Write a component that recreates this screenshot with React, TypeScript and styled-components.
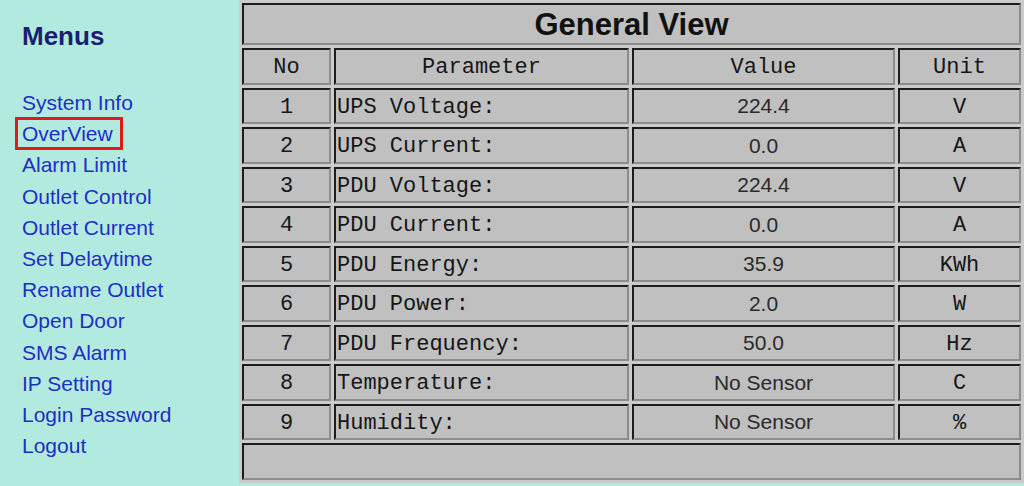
import React from "react";
import styled, { createGlobalStyle, css } from "styled-components";

const GlobalStyle = createGlobalStyle`
  html, body { margin: 0; padding: 0; background: #b2eadf; }
  body { width: 1024px; height: 486px; overflow: hidden; font-family: "Liberation Sans", Arial, sans-serif; }
`;

const Page = styled.div`
  display: flex;
  align-items: flex-start;
  width: 1024px;
  height: 486px;
  background: #b2eadf;
`;

const Sidebar = styled.nav`
  width: 239px;
  flex: none;
  box-sizing: border-box;
  padding: 21px 0 0 22px;
`;

const MenuTitle = styled.h1`
  margin: 0;
  font: bold 26px/30px "Liberation Sans", Arial, sans-serif;
  color: #1b1f70;
`;

const MenuList = styled.ul`
  list-style: none;
  margin: 36px 0 0;
  padding: 0;
`;

const MenuItem = styled.li`
  height: 31.2px;
  font: 21px/31.2px "Liberation Sans", Arial, sans-serif;
`;

const MenuLink = styled.a<{ $active?: boolean }>`
  display: inline-block;
  color: #1f2fc4;
  text-decoration: none;
  ${(p) =>
    p.$active &&
    css`
      outline: 3px solid #e01a1a;
      outline-offset: -2px;
      padding: 0 9px 0 6px;
      margin-left: -6px;
    `}
`;

const Table = styled.table`
  flex: none;
  width: 785px;
  table-layout: fixed;
  border-collapse: separate;
  border-spacing: 3px;
  background: #cbcbcb;
`;

const Row = styled.tr<{ $title?: boolean }>`
  height: ${(p) => (p.$title ? "42px" : "36.5px")};
`;

const Cell = styled.td<{ $kind?: "mono" | "sans" | "title"; $left?: boolean }>`
  background: #c0c0c0;
  border-style: solid;
  border-width: 2px;
  border-color: #1c1c1c #8c8c8c #8c8c8c #1c1c1c;
  padding: 0 1px;
  vertical-align: middle;
  text-align: ${(p) => (p.$left ? "left" : "center")};
  white-space: pre;
  overflow: hidden;
  color: #161616;
  ${(p) =>
    p.$kind === "title"
      ? css`
          font-family: "Liberation Sans", Arial, sans-serif;
          font-size: 31px;
          font-weight: bold;
          line-height: 1;
          color: #111;
        `
      : p.$kind === "sans"
      ? css`
          font-family: "Liberation Sans", Arial, sans-serif;
          font-size: 21px;
          font-weight: normal;
          line-height: 1;
          color: #2a2a2a;
          padding-top: 0;
        `
      : css`
          font-family: "Liberation Mono", "Courier New", monospace;
          font-size: 22px;
          font-weight: normal;
          line-height: 1;
          padding-top: 4px;
        `}
`;

const HeadCell = styled(Cell).attrs({ as: "th" })``;

const menus = [
  "System Info",
  "OverView",
  "Alarm Limit",
  "Outlet Control",
  "Outlet Current",
  "Set Delaytime",
  "Rename Outlet",
  "Open Door",
  "SMS Alarm",
  "IP Setting",
  "Login Password",
  "Logout",
];

const rows: [string, string, string, string][] = [
  ["1", "UPS Voltage:", "224.4", "V"],
  ["2", "UPS Current:", "0.0", "A"],
  ["3", "PDU Voltage:", "224.4", "V"],
  ["4", "PDU Current:", "0.0", "A"],
  ["5", "PDU Energy:", "35.9", "KWh"],
  ["6", "PDU Power:", "2.0", "W"],
  ["7", "PDU Frequency:", "50.0", "Hz"],
  ["8", "Temperature:", "No Sensor", "C"],
  ["9", "Humidity:", "No Sensor", "%"],
];

export default function App() {
  return (
    <>
      <GlobalStyle />
      <Page>
        <Sidebar>
          <MenuTitle>Menus</MenuTitle>
          <MenuList>
            {menus.map((m) => (
              <MenuItem key={m}>
                <MenuLink href="#" $active={m === "OverView"}>
                  {m}
                </MenuLink>
              </MenuItem>
            ))}
          </MenuList>
        </Sidebar>
        <Table>
          <colgroup>
            <col style={{ width: 89 }} />
            <col style={{ width: 295 }} />
            <col style={{ width: 263 }} />
            <col style={{ width: 123 }} />
          </colgroup>
          <thead>
            <Row $title>
              <HeadCell colSpan={4} $kind="title">
                General View
              </HeadCell>
            </Row>
            <Row>
              <HeadCell>No</HeadCell>
              <HeadCell>Parameter</HeadCell>
              <HeadCell>Value</HeadCell>
              <HeadCell>Unit</HeadCell>
            </Row>
          </thead>
          <tbody>
            {rows.map(([no, param, value, unit]) => (
              <Row key={no}>
                <Cell>{no}</Cell>
                <Cell $left>{param}</Cell>
                <Cell $kind="sans">{value}</Cell>
                <Cell>{unit}</Cell>
              </Row>
            ))}
            <Row>
              <Cell colSpan={4} />
            </Row>
          </tbody>
        </Table>
      </Page>
    </>
  );
}
